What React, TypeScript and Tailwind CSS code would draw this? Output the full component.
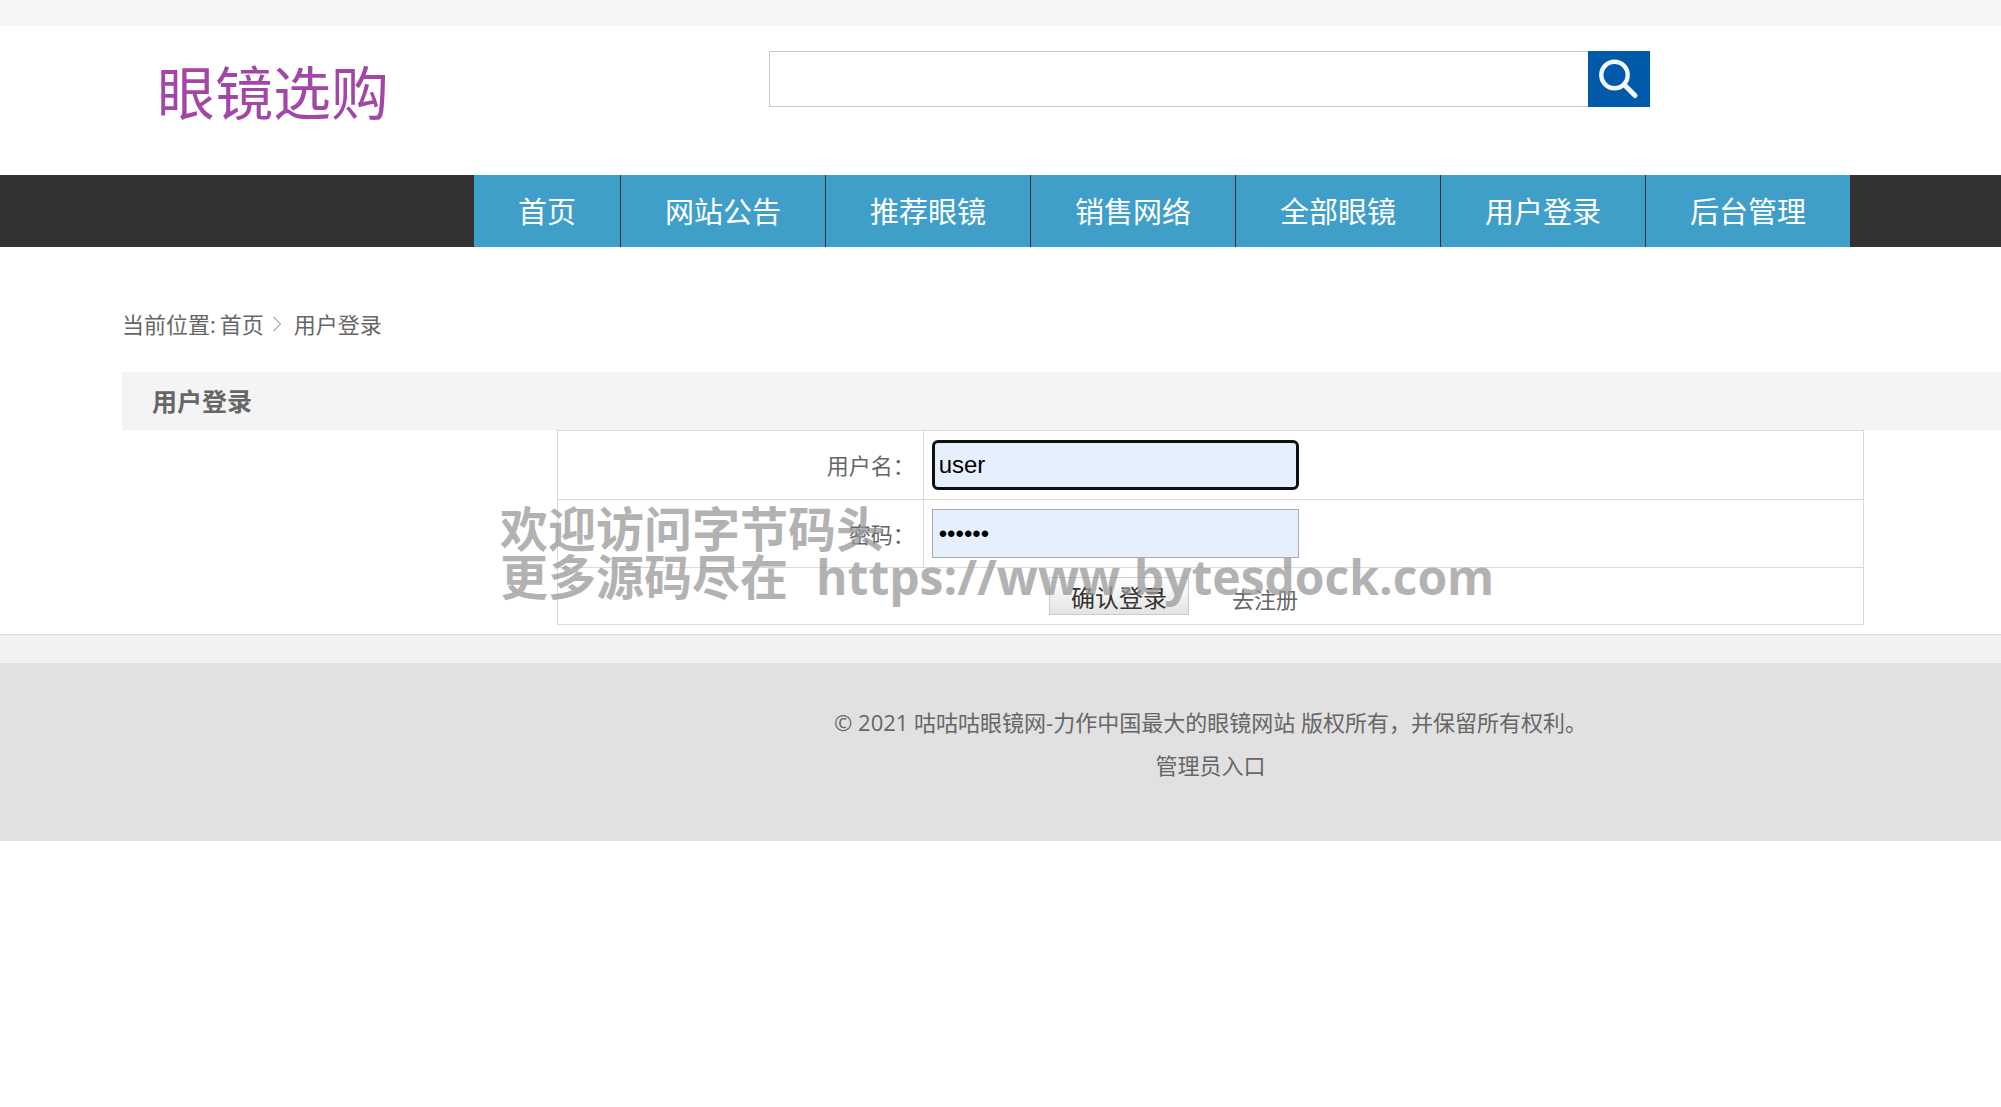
import { useState } from 'react';

const navItems = ['首页', '网站公告', '推荐眼镜', '销售网络', '全部眼镜', '用户登录', '后台管理'];

export default function App() {
    const [keyword, setKeyword] = useState('');
    const [username, setUsername] = useState('user');
    const [password, setPassword] = useState('123456');

    const handleSubmit = (e: React.FormEvent) => {
        e.preventDefault();
    };

    return (
        <div className="relative min-h-screen overflow-hidden bg-white font-['Open_Sans','Noto_Sans_CJK_SC',sans-serif] text-[22px] leading-8 text-[#666]">
            <div className="h-[26px] bg-[#f5f5f5]" />

            <header className="flex items-start pt-[25px] pb-[57px] pl-[157px]">
                <a href="#" className="mt-[11px] h-14 w-[612px] shrink-0 font-['Noto_Sans_CJK_SC',sans-serif] text-[58px] leading-[56px] text-[#a347a6]">
                    眼镜选购
                </a>
                <form onSubmit={handleSubmit} className="mr-[351px] flex h-14 grow">
                    <input
                        type="text"
                        aria-label="搜索"
                        value={keyword}
                        onChange={(e) => setKeyword(e.target.value)}
                        className="min-w-0 grow border border-r-0 border-[#c8c8c8] px-3 outline-none"
                    />
                    <button type="submit" aria-label="搜索" className="h-14 w-[62px] shrink-0 bg-[#0059a9]">
                        <svg viewBox="0 0 62 56" className="h-14 w-[62px]" fill="none" stroke="#f4f9fd" strokeLinecap="round">
                            <circle cx="26.5" cy="24" r="13.2" strokeWidth="4.4" />
                            <path d="M36.5 34L47 44.5" strokeWidth="5" />
                        </svg>
                    </button>
                </form>
            </header>

            <nav className="flex h-[72px] bg-[#323232] pl-[474px]">
                {navItems.map((item) => (
                    <a
                        key={item}
                        href="#"
                        className="shrink-0 border-r border-[#323232] bg-[#3f9fc8] px-11 text-[29px] leading-[74px] text-white"
                    >
                        {item}
                    </a>
                ))}
            </nav>

            <main className="pl-[122px]">
                <div className="flex items-center pt-[61px] pb-8">
                    <span>当前位置:</span>
                    <a href="#" className="ml-1">首页</a>
                    <svg viewBox="0 0 10 16" className="mx-2 h-4 w-[10px]" fill="none" stroke="#777" strokeWidth="1">
                        <path d="M1.5 1L8.5 8L1.5 15" />
                    </svg>
                    <span className="ml-1">用户登录</span>
                </div>

                <h1 className="bg-[#f4f4f4] pl-[30px] text-[25px] leading-[58px] font-bold">用户登录</h1>

                <form onSubmit={handleSubmit} className="pr-[137px] pb-[9px] pl-[435px]">
                    <table className="w-full table-fixed border-collapse border border-[#dadada]">
                        <tbody>
                            <tr className="h-[69px]">
                                <td className="w-[28%] border border-[#dadada] pr-2 text-right">
                                    <label htmlFor="username">用户名：</label>
                                </td>
                                <td className="border border-[#dadada] pl-2">
                                    <input
                                        id="username"
                                        type="text"
                                        value={username}
                                        onChange={(e) => setUsername(e.target.value)}
                                        className="block h-[50px] w-[367px] rounded-md border-[3px] border-[#101010] bg-[#e6f0fd] px-1 font-['Liberation_Sans',sans-serif] text-2xl text-black outline-none"
                                    />
                                </td>
                            </tr>
                            <tr className="h-[68px]">
                                <td className="border border-[#dadada] pr-2 text-right">
                                    <label htmlFor="password">密码：</label>
                                </td>
                                <td className="border border-[#dadada] pl-2">
                                    <input
                                        id="password"
                                        type="password"
                                        value={password}
                                        onChange={(e) => setPassword(e.target.value)}
                                        className="block h-[49px] w-[367px] border border-[#a9adb3] bg-[#e6f0fd] px-[6px] font-['Liberation_Sans',sans-serif] text-2xl text-black outline-none"
                                    />
                                </td>
                            </tr>
                            <tr className="h-[57px]">
                                <td colSpan={2} className="border border-[#dadada]">
                                    <div className="flex items-end pl-[491px]">
                                        <button
                                            type="submit"
                                            className="h-[38px] w-[140px] border border-[#ccc] bg-linear-to-b from-white to-[#e4e4e4] pt-1 text-2xl leading-8 text-[#333]"
                                        >
                                            确认登录
                                        </button>
                                        <a href="#" className="ml-[43px]">去注册</a>
                                    </div>
                                </td>
                            </tr>
                        </tbody>
                    </table>
                </form>
            </main>

            <footer className="border-t border-[#dadada]">
                <div className="h-7 bg-[#f1f1f1]" />
                <div className="bg-[#e1e1e1] pt-[38px] pb-[54px] pl-[420px] text-center leading-[43px]">
                    <p>© 2021 咕咕咕眼镜网-力作中国最大的眼镜网站 版权所有，并保留所有权利。</p>
                    <p>
                        <a href="#">管理员入口</a>
                    </p>
                </div>
            </footer>

            <div className="pointer-events-none absolute top-[505px] left-[500px] text-5xl leading-[48px] font-bold whitespace-nowrap text-[#999]/75">
                <p>欢迎访问字节码头</p>
                <p className="flex gap-7">
                    <span>更多源码尽在</span>
                    <span>https://www.bytesdock.com</span>
                </p>
            </div>
        </div>
    );
}
